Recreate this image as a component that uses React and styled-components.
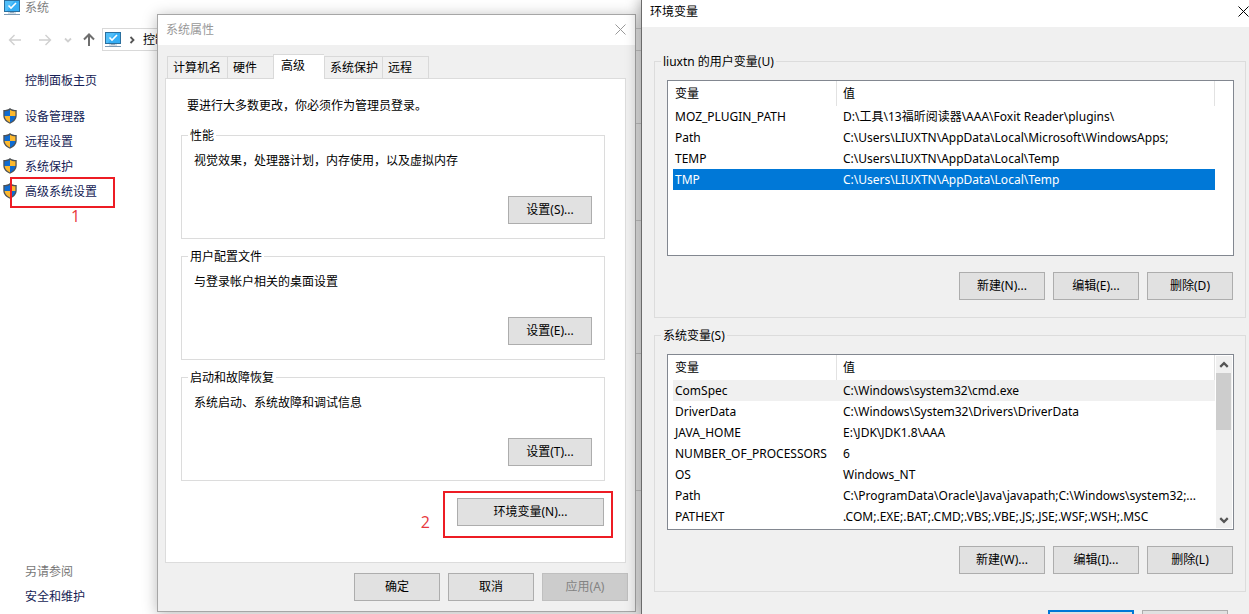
import React from "react";
import styled, { createGlobalStyle, css } from "styled-components";

const GlobalStyle = createGlobalStyle`
  * { box-sizing: border-box; }
  html, body { margin: 0; padding: 0; }
  body {
    overflow: hidden;
    background: #fff;
    color: #000;
    font-family: "Noto Sans", "Noto Sans CJK SC", sans-serif;
    font-size: 12px;
    line-height: 16px;
  }
  button { font: inherit; color: inherit; }
  p { margin: 0; }
`;

const Desktop = styled.div`
  position: relative;
  height: 100vh;
  overflow: hidden;
`;

/* ---------- Explorer window ---------- */

const Explorer = styled.div`
  display: flex;
  flex-direction: column;
  min-height: 100%;
`;

const ExplorerTitle = styled.header`
  display: flex;
  align-items: center;
  gap: 5px;
  height: 16px;
  padding-left: 4px;
  color: #808080;
`;

const NavBar = styled.nav`
  display: flex;
  align-items: center;
  margin-top: 12px;
  padding-left: 8px;
  height: 23px;
`;

const NavButton = styled.button`
  display: flex;
  align-items: center;
  justify-content: center;
  width: ${(p) => p.$width}px;
  height: 23px;
  margin-right: ${(p) => p.$gap}px;
  padding: 0;
  border: 0;
  background: none;
`;

const AddressBar = styled.div`
  flex: 1;
  display: flex;
  align-items: center;
  gap: 7px;
  height: 23px;
  padding-left: 2px;
  border: 1px solid #d9d9d9;
  white-space: nowrap;
`;

const ExplorerBody = styled.div`
  flex: 1;
  display: flex;
`;

const Sidebar = styled.aside`
  display: flex;
  flex-direction: column;
  width: 158px;
  padding: 22px 0 9px;
`;

const SideLink = styled.a`
  position: relative;
  display: flex;
  align-items: center;
  gap: 8px;
  height: 16px;
  padding-left: ${(p) => (p.$shield ? 3 : 25)}px;
  color: #151c55;
  text-decoration: none;

  svg {
    flex: none;
    margin-bottom: 2px;
  }
`;

const SideList = styled.div`
  display: flex;
  flex-direction: column;
  gap: 9px;
  margin-top: 20px;
`;

const SideFooter = styled.div`
  display: flex;
  flex-direction: column;
  gap: 9px;
  margin-top: auto;
`;

const SideCaption = styled.p`
  padding-left: 25px;
  color: #777;
`;

const InfoPane = styled.main`
  flex: 1;
  padding-top: 72px;
`;

const InfoSection = styled.section`
  height: ${(p) => p.$height}px;
  border-top: 1px solid #d9d9d9;
`;

/* ---------- Shared dialog parts ---------- */

const PushButton = styled.button`
  width: ${(p) => p.$width || 86}px;
  height: 28px;
  padding: 0;
  border: 1px solid #adadad;
  border-radius: 0;
  background: #e1e1e1;
  text-align: center;
  white-space: nowrap;
  ${(p) => p.$primary && css`border: 2px solid #0078d7;`}
  &:disabled {
    border-color: #bfbfbf;
    background: #ccc;
    color: #838383;
  }
`;

const ButtonRow = styled.div`
  display: flex;
  justify-content: flex-end;
  gap: 8px;
`;

const Group = styled.fieldset`
  min-width: 0;
  margin: 0;
  padding: 0;
  border: 1px solid #dcdcdc;
`;

const GroupTitle = styled.legend`
  height: 17px;
  margin-left: 6px;
  padding: 0 2px;
  line-height: 17px;
`;

const CloseButton = styled.button`
  display: flex;
  padding: 0;
  border: 0;
  background: none;
`;

const Highlight = styled.span`
  position: absolute;
  inset: ${(p) => p.$inset};
  border: 2px solid #ed1c24;
  pointer-events: none;
`;

const StepNumber = styled.span`
  position: absolute;
  color: #e8363d;
  font-family: "Open Sans", sans-serif;
  font-size: 16px;
  line-height: 20px;
  ${(p) =>
    p.$below
      ? css`top: 100%; left: 59px;`
      : css`right: 100%; top: 19px; margin-right: 15px;`}
`;

/* ---------- System properties ---------- */

const PropertiesDialog = styled.section`
  position: absolute;
  top: 14px;
  left: 157px;
  width: 479px;
  border: 1px solid #a6a6a6;
  background: #f0f0f0;
  box-shadow: 0 2px 14px rgba(0, 0, 0, 0.28);
`;

const PropertiesTitle = styled.header`
  display: flex;
  align-items: center;
  justify-content: space-between;
  height: 30px;
  padding: 0 9px 1px 8px;
  background: #fff;
  color: #999;
`;

const PropertiesBody = styled.div`
  padding: 9px 7px 10px;
`;

const TabList = styled.div`
  display: flex;
  align-items: flex-end;
  height: 25px;
  padding-left: 2px;
`;

const Tab = styled.button`
  flex: none;
  width: ${(p) => p.$width}px;
  height: 23px;
  margin: 0;
  padding: 1px 0 0 5px;
  border: 1px solid #d9d9d9;
  border-right-width: ${(p) => (p.$last ? 1 : 0)}px;
  background: #f0f0f0;
  text-align: left;
  white-space: nowrap;
  ${(p) =>
    p.$active &&
    css`
      height: 25px;
      padding: 0 0 2px 7px;
      border-bottom: 0;
      background: #fff;
    `}
`;

const TabPanel = styled.div`
  display: flex;
  flex-direction: column;
  margin: -1px 2px 0 0;
  padding: 19px 20px 36px 15px;
  border: 1px solid #dcdcdc;
  background: #fff;
`;

const TabNote = styled.p`
  padding-left: 6px;
`;

const GroupStack = styled.div`
  display: flex;
  flex-direction: column;
  gap: 9px;
  margin-top: 13px;
`;

const SettingBody = styled.div`
  display: flex;
  flex-direction: column;
  gap: 27px;
  padding: 9px 12px 14px;
`;

const EnvButtonHolder = styled.div`
  position: relative;
  display: flex;
  align-self: flex-end;
  margin: 17px 1px 0 0;
`;

const PropertiesFooter = styled(ButtonRow)`
  margin-top: 10px;
`;

/* ---------- Environment variables ---------- */

const EnvDialog = styled.section`
  position: absolute;
  top: -1px;
  left: 641px;
  right: 0;
  min-height: calc(100% + 20px);
  border-left: 1px solid #6b6b6b;
  background: #f0f0f0;
  box-shadow: 0 0 14px rgba(0, 0, 0, 0.42);
`;

const EnvTitle = styled.header`
  display: flex;
  align-items: center;
  justify-content: space-between;
  height: 28px;
  padding: 1px 0 4px 8px;
  background: #fff;
`;

const EnvBody = styled.div`
  display: flex;
  flex-direction: column;
  gap: 9px;
  padding: 26px 3px 0 12px;
`;

const VariablesBody = styled.div`
  display: flex;
  flex-direction: column;
  gap: 16px;
  padding: 10px 11px 17px 12px;
`;

const VariableActions = styled(ButtonRow)`
  padding-right: 1px;
`;

const ListBox = styled.div`
  display: flex;
  justify-content: space-between;
  min-height: 176px;
  padding: 0 1px 0 5px;
  border: 1px solid #828790;
  background: #fff;
`;

const VariableTable = styled.table`
  flex: 1;
  align-self: flex-start;
  min-width: 0;
  table-layout: fixed;
  border-collapse: separate;
  border-spacing: 0;
  white-space: nowrap;
`;

const HeadCell = styled.th`
  width: ${(p) => p.$width};
  height: 25px;
  padding: 0 0 0 ${(p) => (p.$width === "auto" ? 6 : 2)}px;
  border-right: 1px solid #e2e2e2;
  font-weight: normal;
  text-align: left;
`;

const Cell = styled.td`
  height: 21px;
  padding: 0 0 0 ${(p) => (p.$value ? 6 : 2)}px;
`;

const rowTone = {
  selected: css`background: #0078d7; color: #fff;`,
  focused: css`background: #f0f0f0;`,
};

const VariableRow = styled.tr`
  ${(p) => rowTone[p.$tone]}
`;

const ScrollTrack = styled.div`
  display: flex;
  flex-direction: column;
  flex: none;
  width: 16px;
  margin: 1px 0 1px 1px;
  background: ${(p) => (p.$shown ? "#f0f0f0" : "transparent")};
`;

const ScrollButton = styled.button`
  display: flex;
  align-items: center;
  justify-content: center;
  width: 15px;
  height: 17px;
  padding: 0;
  border: 0;
  background: none;
`;

const ScrollThumb = styled.div`
  width: 15px;
  height: 57px;
  margin-bottom: auto;
  background: #cdcdcd;
`;

const EnvFooter = styled(ButtonRow)`
  padding: 9px 18px 0 0;
`;

/* ---------- Icons ---------- */

const MonitorIcon = () => (
  <svg width="16" height="16" viewBox="0 0 16 16" aria-hidden="true">
    <rect x="0" y="0" width="16" height="12" fill="#2b6f9e" />
    <rect x="1" y="1" width="14" height="10" fill="#35aef5" />
    <path d="M1 1h9L3 11H1z" fill="#5cc4fb" opacity="0.7" />
    <path d="M4.500 5.500l2.500 2.500 5-5" fill="none" stroke="#fff" strokeWidth="1.600" />
    <rect x="6" y="12" width="4" height="1" fill="#8aa6ba" />
    <rect x="4" y="12.500" width="8" height="1" fill="#a9bccb" />
    <rect x="0" y="14" width="16" height="1" fill="#7d9ab3" />
  </svg>
);

const ShieldIcon = () => (
  <svg width="14" height="16" viewBox="0 0 14 16" aria-hidden="true">
    <path d="M7 0C5.500 1.400 3 2 .3 2v5.500c0 3.800 2.700 6.500 6.700 8.300 4-1.800 6.700-4.500 6.700-8.300V2C11 2 8.500 1.400 7 0z" fill="#4e5256" />
    <path d="M7 1.700C5.500 2.700 3.600 3.200 1.600 3.300V8H7z" fill="#0f6bd0" />
    <path d="M7 1.700c1.500 1 3.400 1.500 5.400 1.600V8H7z" fill="#fdb92e" />
    <path d="M1.600 8c.3 2.900 2.200 5 5.400 6.500V8z" fill="#fdb92e" />
    <path d="M12.400 8c-.3 2.900-2.200 5-5.400 6.500V8z" fill="#0f6bd0" />
  </svg>
);

const ArrowIcon = ({ angle = 0, color }) => (
  <svg width="14" height="14" viewBox="0 0 14 14" aria-hidden="true">
    <g transform={`rotate(${angle} 7 7)`} fill="none" stroke={color} strokeWidth={angle === 90 ? 2 : 1.4}>
      <path d="M1.500 7H13M6.500 2L1.500 7l5 5" />
    </g>
  </svg>
);

const ChevronIcon = ({ angle = 0, color = "#555", size = 8 }) => (
  <svg width={size} height={size} viewBox="0 0 8 8" aria-hidden="true">
    <path
      d="M1 2.500l3 3 3-3"
      transform={`rotate(${angle} 4 4)`}
      fill="none"
      stroke={color}
      strokeWidth="1.800"
    />
  </svg>
);

const CloseIcon = ({ color }) => (
  <svg width="11" height="11" viewBox="0 0 11 11" aria-hidden="true">
    <path d="M.5.500l10 10M10.500.500l-10 10" stroke={color} strokeWidth="1" fill="none" />
  </svg>
);

/* ---------- Data ---------- */

const sideLinks = ["设备管理器", "远程设置", "系统保护", "高级系统设置"];

const tabs = [
  { label: "计算机名", width: 60 },
  { label: "硬件", width: 46 },
  { label: "高级", width: 51, active: true },
  { label: "系统保护", width: 58 },
  { label: "远程", width: 47 },
];

const settings = [
  { title: "性能", text: "视觉效果，处理器计划，内存使用，以及虚拟内存", button: "设置(S)..." },
  { title: "用户配置文件", text: "与登录帐户相关的桌面设置", button: "设置(E)..." },
  { title: "启动和故障恢复", text: "系统启动、系统故障和调试信息", button: "设置(T)..." },
];

const userVariables = [
  ["MOZ_PLUGIN_PATH", "D:\\工具\\13福昕阅读器\\AAA\\Foxit Reader\\plugins\\"],
  ["Path", "C:\\Users\\LIUXTN\\AppData\\Local\\Microsoft\\WindowsApps;"],
  ["TEMP", "C:\\Users\\LIUXTN\\AppData\\Local\\Temp"],
  ["TMP", "C:\\Users\\LIUXTN\\AppData\\Local\\Temp", "selected"],
];

const systemVariables = [
  ["ComSpec", "C:\\Windows\\system32\\cmd.exe", "focused"],
  ["DriverData", "C:\\Windows\\System32\\Drivers\\DriverData"],
  ["JAVA_HOME", "E:\\JDK\\JDK1.8\\AAA"],
  ["NUMBER_OF_PROCESSORS", "6"],
  ["OS", "Windows_NT"],
  ["Path", "C:\\ProgramData\\Oracle\\Java\\javapath;C:\\Windows\\system32;..."],
  ["PATHEXT", ".COM;.EXE;.BAT;.CMD;.VBS;.VBE;.JS;.JSE;.WSF;.WSH;.MSC"],
];

function VariableGroup({ title, rows, buttons, scroll }) {
  return (
    <Group>
      <GroupTitle>{title}</GroupTitle>
      <VariablesBody>
        <ListBox>
          <VariableTable>
            <thead>
              <tr>
                <HeadCell $width="164px">变量</HeadCell>
                <HeadCell $width="auto">值</HeadCell>
              </tr>
            </thead>
            <tbody>
              {rows.map(([name, value, tone]) => (
                <VariableRow key={name} $tone={tone}>
                  <Cell>{name}</Cell>
                  <Cell $value>{value}</Cell>
                </VariableRow>
              ))}
            </tbody>
          </VariableTable>
          <ScrollTrack $shown={scroll}>
            {scroll && (
              <>
                <ScrollButton aria-label="向上滚动"><ChevronIcon angle={180} size={10} /></ScrollButton>
                <ScrollThumb />
                <ScrollButton aria-label="向下滚动"><ChevronIcon size={10} /></ScrollButton>
              </>
            )}
          </ScrollTrack>
        </ListBox>
        <VariableActions>
          {buttons.map((label) => (
            <PushButton key={label}>{label}</PushButton>
          ))}
        </VariableActions>
      </VariablesBody>
    </Group>
  );
}

export default function App() {
  return (
    <Desktop>
      <GlobalStyle />
      <Explorer>
        <ExplorerTitle><MonitorIcon />系统</ExplorerTitle>
        <NavBar>
          <NavButton $width={14} $gap={16} aria-label="后退"><ArrowIcon color="#d0d0d0" /></NavButton>
          <NavButton $width={14} $gap={12} aria-label="前进"><ArrowIcon angle={180} color="#d0d0d0" /></NavButton>
          <NavButton $width={8} $gap={10} aria-label="最近位置"><ChevronIcon color="#d0d0d0" /></NavButton>
          <NavButton $width={14} $gap={6} aria-label="向上"><ArrowIcon angle={90} color="#6e6e6e" /></NavButton>
          <AddressBar><MonitorIcon /><ChevronIcon angle={-90} /><span>控制面板</span></AddressBar>
        </NavBar>
        <ExplorerBody>
          <Sidebar>
            <SideLink href="#home">控制面板主页</SideLink>
            <SideList>
              {sideLinks.map((label, i) => (
                <SideLink key={label} href={`#link-${i}`} $shield>
                  <ShieldIcon />
                  {label}
                  {i === 3 && (
                    <Highlight $inset="-7px 43px -8px 10px">
                      <StepNumber $below>1</StepNumber>
                    </Highlight>
                  )}
                </SideLink>
              ))}
            </SideList>
            <SideFooter>
              <SideCaption>另请参阅</SideCaption>
              <SideLink href="#security">安全和维护</SideLink>
            </SideFooter>
          </Sidebar>
          <InfoPane>
            <InfoSection $height={97} />
            <InfoSection $height={133} />
            <InfoSection $height={137} />
            <InfoSection $height={100} />
          </InfoPane>
        </ExplorerBody>
      </Explorer>

      <PropertiesDialog aria-label="系统属性">
        <PropertiesTitle>
          系统属性
          <CloseButton aria-label="关闭"><CloseIcon color="#999" /></CloseButton>
        </PropertiesTitle>
        <PropertiesBody>
          <TabList role="tablist">
            {tabs.map((tab, i) => (
              <Tab
                key={tab.label}
                role="tab"
                aria-selected={!!tab.active}
                $width={tab.width}
                $active={tab.active}
                $last={i === tabs.length - 1}
              >
                {tab.label}
              </Tab>
            ))}
          </TabList>
          <TabPanel role="tabpanel">
            <TabNote>要进行大多数更改，你必须作为管理员登录。</TabNote>
            <GroupStack>
              {settings.map((item) => (
                <Group key={item.title}>
                  <GroupTitle>{item.title}</GroupTitle>
                  <SettingBody>
                    <p>{item.text}</p>
                    <ButtonRow><PushButton $width={84}>{item.button}</PushButton></ButtonRow>
                  </SettingBody>
                </Group>
              ))}
            </GroupStack>
            <EnvButtonHolder>
              <PushButton $width={147}>环境变量(N)...</PushButton>
              <Highlight $inset="-7px -9px -12px -14px">
                <StepNumber>2</StepNumber>
              </Highlight>
            </EnvButtonHolder>
          </TabPanel>
          <PropertiesFooter>
            <PushButton>确定</PushButton>
            <PushButton>取消</PushButton>
            <PushButton disabled>应用(A)</PushButton>
          </PropertiesFooter>
        </PropertiesBody>
      </PropertiesDialog>

      <EnvDialog aria-label="环境变量">
        <EnvTitle>
          环境变量
          <CloseButton aria-label="关闭"><CloseIcon color="#000" /></CloseButton>
        </EnvTitle>
        <EnvBody>
          <VariableGroup
            title="liuxtn 的用户变量(U)"
            rows={userVariables}
            buttons={["新建(N)...", "编辑(E)...", "删除(D)"]}
          />
          <VariableGroup
            title="系统变量(S)"
            rows={systemVariables}
            buttons={["新建(W)...", "编辑(I)...", "删除(L)"]}
            scroll
          />
          <EnvFooter>
            <PushButton $primary aria-label="确定" />
            <PushButton aria-label="取消" />
          </EnvFooter>
        </EnvBody>
      </EnvDialog>
    </Desktop>
  );
}
